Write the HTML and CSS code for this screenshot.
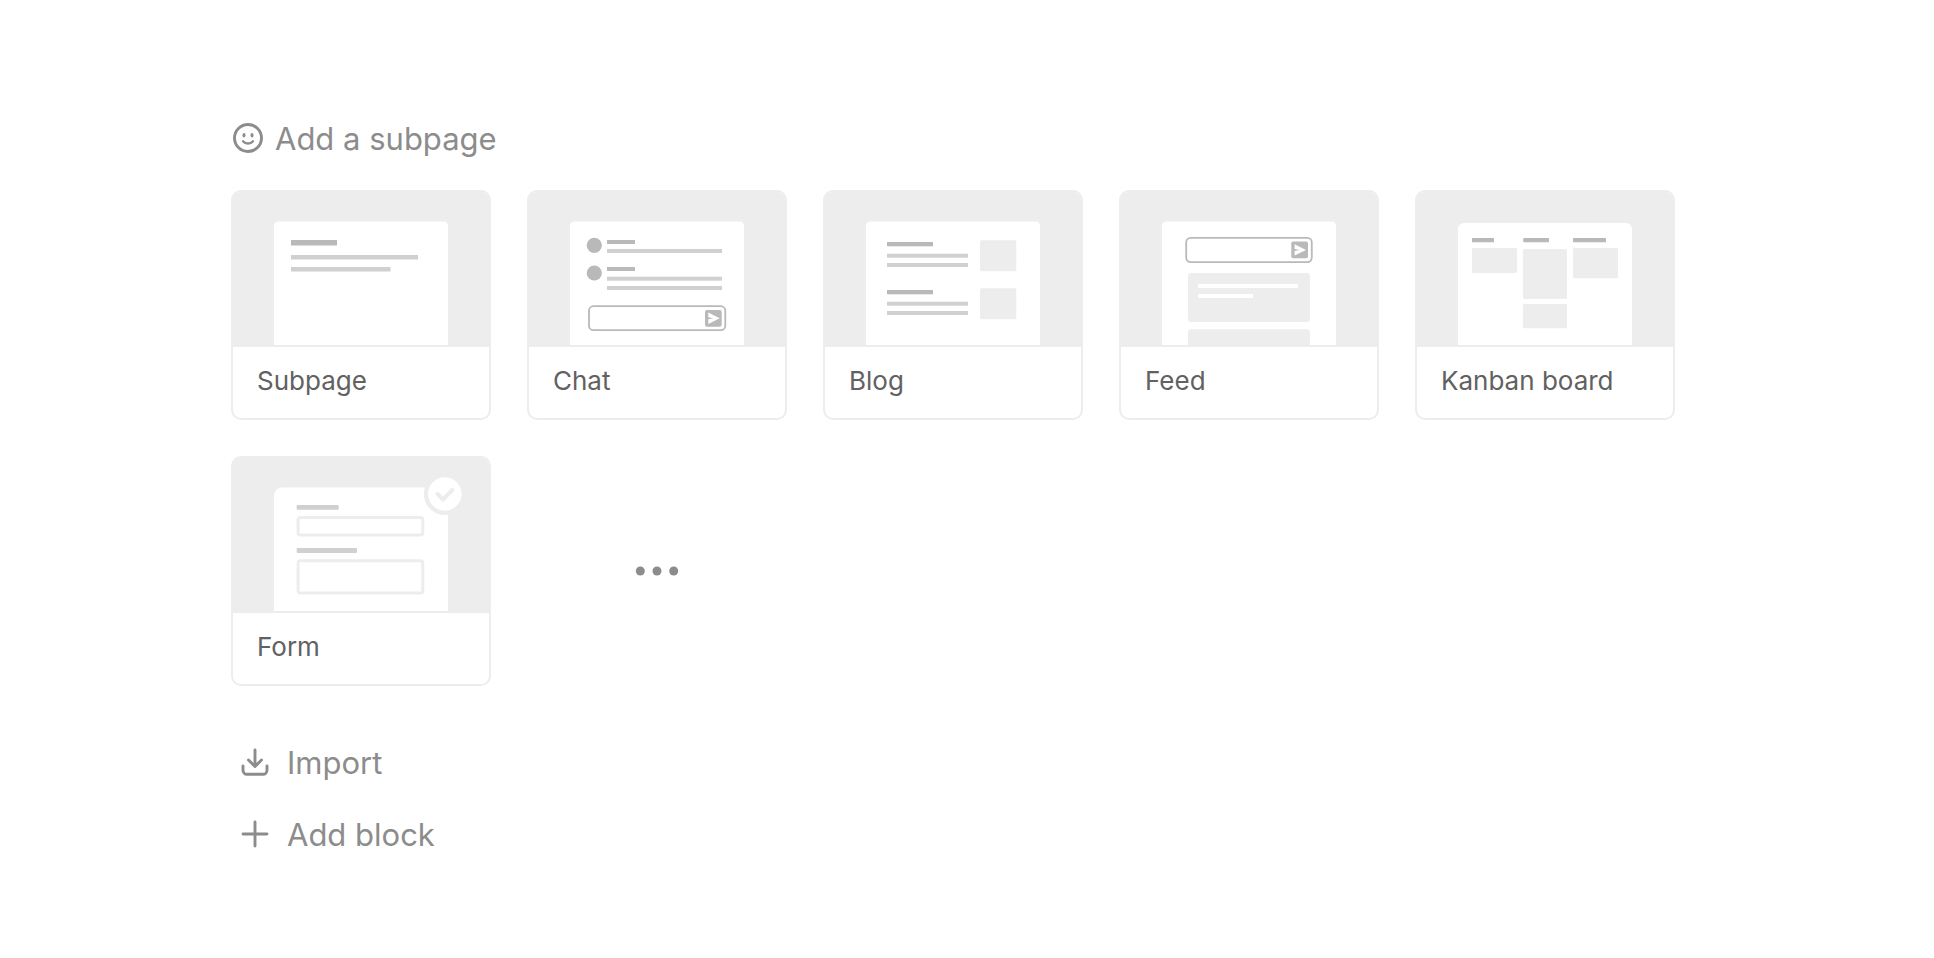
FILE: index.html
```
<!DOCTYPE html>
<html lang="en">
<head>
  <meta charset="UTF-8">
  <title>Add a subpage</title>
  <link rel="stylesheet" href="styles.css">
</head>
<body>
  <main class="page">
    <h1 class="title">
      <svg class="icon" width="30" height="30" viewBox="0 0 30 30" aria-hidden="true">
        <circle class="stroke" cx="15" cy="15" r="13.5"/>
        <ellipse class="fill" cx="11" cy="12.300" rx="1.500" ry="2.200"/>
        <ellipse class="fill" cx="19" cy="12.300" rx="1.500" ry="2.200"/>
        <path class="smile" d="M10 18.300c2.600 3 7.400 3 10 0"/>
      </svg>
      Add a subpage
    </h1>

    <div class="templates">
      <button type="button" class="card">
        <svg class="preview" viewBox="0 0 256 155" aria-hidden="true">
          <path class="sheet" d="M41 153V34a4.500 4.500 0 0 1 4.500-4.500h165a4.500 4.500 0 0 1 4.500 4.500v119z"/>
          <rect class="dark" x="58" y="48" width="46" height="5.500"/>
          <rect class="mid" x="58" y="63" width="127" height="4.500"/>
          <rect class="mid" x="58" y="75" width="99.500" height="4.500"/>
        </svg>
        <span class="name">Subpage</span>
      </button>

      <button type="button" class="card">
        <svg class="preview" viewBox="0 0 256 155" aria-hidden="true">
          <path class="sheet" d="M41 153V34a4.500 4.500 0 0 1 4.500-4.500h165a4.500 4.500 0 0 1 4.500 4.500v119z"/>
          <circle class="dark" cx="65.300" cy="53.300" r="7.600"/>
          <rect class="dark" x="78" y="48" width="28" height="4"/>
          <rect class="mid" x="78" y="57" width="115" height="4"/>
          <circle class="dark" cx="65.300" cy="81" r="7.600"/>
          <rect class="dark" x="78" y="75" width="28" height="4"/>
          <rect class="mid" x="78" y="84.700" width="115" height="4"/>
          <rect class="mid" x="78" y="94" width="115" height="4"/>
          <rect class="box" x="60" y="114.200" width="136.300" height="24" rx="4.500"/>
          <rect class="dark" x="176" y="118" width="16.700" height="16.700" rx="2"/>
          <path class="sheet" d="M179.300 120.600l11.400 5.700-11.400 5.700v-4.700l5-1-5-1z"/>
        </svg>
        <span class="name">Chat</span>
      </button>

      <button type="button" class="card">
        <svg class="preview" viewBox="0 0 256 155" aria-hidden="true">
          <path class="sheet" d="M41 153V34a4.500 4.500 0 0 1 4.500-4.500h165a4.500 4.500 0 0 1 4.500 4.500v119z"/>
          <rect class="dark" x="62" y="50" width="46" height="4.300"/>
          <rect class="mid" x="62" y="61.700" width="81" height="4"/>
          <rect class="mid" x="62" y="71" width="81" height="4"/>
          <rect class="light" x="155" y="48.300" width="36.300" height="31" rx="2"/>
          <rect class="dark" x="62" y="98" width="46" height="4.300"/>
          <rect class="mid" x="62" y="109.700" width="81" height="4"/>
          <rect class="mid" x="62" y="119" width="81" height="4"/>
          <rect class="light" x="155" y="96.300" width="36.300" height="31" rx="2"/>
        </svg>
        <span class="name">Blog</span>
      </button>

      <button type="button" class="card">
        <svg class="preview" viewBox="0 0 256 155" aria-hidden="true">
          <path class="sheet" d="M41 153V34a4.500 4.500 0 0 1 4.500-4.500h165a4.500 4.500 0 0 1 4.500 4.500v119z"/>
          <rect class="box" x="65.200" y="45.900" width="125.600" height="24.200" rx="4.500"/>
          <rect class="dark" x="170.300" y="49.600" width="16.700" height="16.700" rx="2"/>
          <path class="sheet" d="M173.600 52.200l11.400 5.700-11.400 5.700v-4.700l5-1-5-1z"/>
          <rect class="light" x="67" y="81" width="122" height="49" rx="3"/>
          <rect class="sheet" x="77" y="92" width="100" height="4"/>
          <rect class="sheet" x="77" y="102" width="55" height="4"/>
          <rect class="light" x="67" y="137.300" width="122" height="20" rx="3"/>
        </svg>
        <span class="name">Feed</span>
      </button>

      <button type="button" class="card">
        <svg class="preview" viewBox="0 0 256 155" aria-hidden="true">
          <path class="sheet" d="M41 153V37a6 6 0 0 1 6-6h162a6 6 0 0 1 6 6v116z"/>
          <rect class="dark" x="55" y="46" width="22" height="4.300" rx="0.500"/>
          <rect class="dark" x="106.300" y="46" width="25.700" height="4.300" rx="0.500"/>
          <rect class="dark" x="156" y="46" width="33" height="4.300" rx="0.500"/>
          <rect class="light" x="55" y="56" width="45" height="25" rx="1.500"/>
          <rect class="light" x="106" y="57" width="44" height="50" rx="1.500"/>
          <rect class="light" x="106" y="112" width="44" height="24.300" rx="1.500"/>
          <rect class="light" x="156" y="56" width="45" height="30.300" rx="1.500"/>
        </svg>
        <span class="name">Kanban board</span>
      </button>

      <button type="button" class="card">
        <svg class="preview" viewBox="0 0 256 155" aria-hidden="true">
          <path class="sheet" d="M41 153V37.500a8 8 0 0 1 8-8h166V153z"/>
          <rect class="mid" x="63.700" y="47" width="42" height="4.700" rx="1"/>
          <rect class="field" x="65.100" y="59.500" width="124.700" height="17.500" rx="2.500"/>
          <rect class="mid" x="63.700" y="90" width="60.300" height="5" rx="1"/>
          <rect class="field" x="65.100" y="102.700" width="124.700" height="32.300" rx="2.500"/>
          <circle class="light" cx="211.800" cy="36" r="21"/>
          <circle class="sheet" cx="211.800" cy="36" r="16.700"/>
          <path class="check" d="M204.500 36l5.500 5.500 9.300-9.500"/>
        </svg>
        <span class="name">Form</span>
      </button>

      <button type="button" class="more" aria-label="More templates">
        <svg width="44" height="10" viewBox="0 0 44 10">
          <circle class="fill" cx="5.300" cy="5" r="4.500"/>
          <circle class="fill" cx="22" cy="5" r="4.500"/>
          <circle class="fill" cx="38.700" cy="5" r="4.500"/>
        </svg>
      </button>
    </div>

    <div class="actions">
      <button type="button" class="action">
        <svg class="icon" width="28" height="28" viewBox="0 0 28 28" aria-hidden="true">
          <path class="stroke" d="M14 2v16.500M7.500 12l6.500 6.500 6.500-6.500M2 18v4.300a4 4 0 0 0 4 4h16a4 4 0 0 0 4-4V18"/>
        </svg>
        Import
      </button>
      <button type="button" class="action">
        <svg class="icon" width="28" height="28" viewBox="0 0 28 28" aria-hidden="true">
          <path class="stroke" d="M14 2v24M2 14h24"/>
        </svg>
        Add block
      </button>
    </div>
  </main>
</body>
</html>
```
FILE: styles.css
```
body {
  margin: 0;
  font-family: Inter, "Liberation Sans", sans-serif;
  background-color: #ffffff;
  color: #8c8c8c;
}

button {
  padding: 0;
  border: none;
  background: none;
  font-family: inherit;
  color: inherit;
  text-align: left;
  cursor: pointer;
}

svg {
  display: block;
}

.page {
  padding: 119px 231px 0;
}

.title {
  display: flex;
  align-items: center;
  gap: 12px;
  margin: 0 0 31px;
  padding-left: 2px;
  font-size: 31px;
  font-weight: 400;
  line-height: 40px;
}

.icon {
  margin-bottom: 2px;
}

.templates {
  display: grid;
  grid-template-columns: repeat(auto-fill, 260px);
  gap: 36px;
}

/* template cards */
.card {
  display: flex;
  flex-direction: column;
  border: 2px solid #ededed;
  border-radius: 10px;
  overflow: hidden;
  background-color: #ffffff;
}

.card:hover {
  border-color: #d0d0d0;
}

.preview {
  width: 100%;
  background-color: #ededed;
}

.name {
  padding: 17px 24px 20px;
  font-size: 26px;
  line-height: 34px;
  color: #616161;
}

.more {
  display: flex;
  align-items: center;
  justify-content: center;
}

.actions {
  display: flex;
  flex-direction: column;
  align-items: flex-start;
  gap: 32px;
  margin-top: 57px;
  padding-left: 10px;
}

.action {
  display: flex;
  align-items: center;
  gap: 18px;
  font-size: 31px;
  line-height: 40px;
}

/* drawing colors */
.sheet {
  fill: #ffffff;
}

.dark {
  fill: #b9b9b9;
}

.mid {
  fill: #d0d0d0;
}

.light {
  fill: #ededed;
}

.fill {
  fill: #8c8c8c;
}

.stroke,
.smile {
  fill: none;
  stroke: #8c8c8c;
  stroke-width: 2.9;
  stroke-linecap: round;
  stroke-linejoin: round;
}

.smile {
  stroke-width: 2.4;
}

.box {
  fill: #ffffff;
  stroke: #b9b9b9;
  stroke-width: 1.8;
}

.field {
  fill: #ffffff;
  stroke: #ededed;
  stroke-width: 3;
}

.check {
  fill: none;
  stroke: #ededed;
  stroke-width: 4;
  stroke-linecap: round;
  stroke-linejoin: round;
}
```
